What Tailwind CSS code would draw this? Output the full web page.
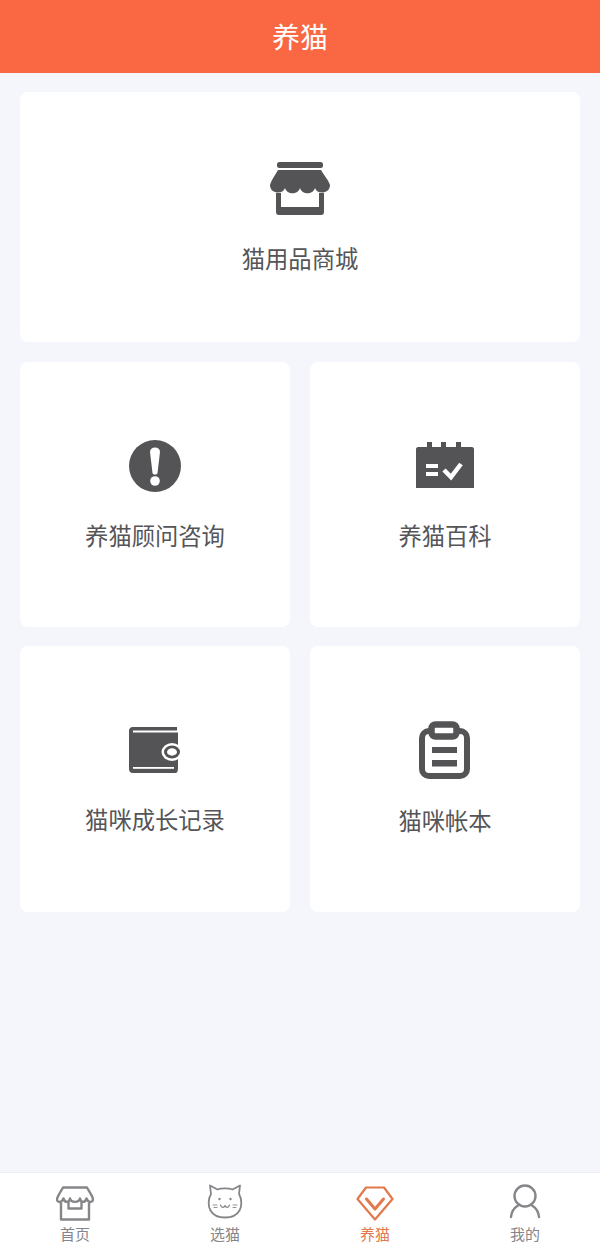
<!DOCTYPE html>
<html lang="zh-CN">
<head>
  <meta charset="UTF-8" />
  <meta name="viewport" content="width=device-width, initial-scale=1.0" />
  <title>养猫</title>
  <script src="https://cdn.jsdelivr.net/npm/@tailwindcss/browser@4"></script>
</head>
<body class="bg-[#f5f6fb] font-['Noto_Sans_CJK_SC','Noto_Sans',sans-serif]">
  <div class="flex flex-col h-[1253px] w-[600px] overflow-hidden">
    <!-- header -->
    <header class="h-[73px] shrink-0 bg-[#f96842] flex items-center justify-center text-white text-[28px] leading-none pb-[2px]">养猫</header>

    <main class="flex-1 px-5 pt-[19px] flex flex-col">
      <a class="h-[250px] bg-white rounded-lg flex flex-col items-center pt-[69px] text-[#555558] text-[23.3px] leading-none">
        <svg class="w-[60px] h-[56px]" viewBox="0 0 60 56">
          <rect x="7" y="1" width="46" height="6" rx="2.500" fill="#545456"/>
          <path d="M8 9H51C54 14 59 20 60 24C60 33 47 34 45 27C43 34 32 34 30 27C28 34 17 34 15 27C13 34 0 33 0 24C1 20 5 14 8 9Z" fill="#545456"/>
          <path d="M6 32V51C6 53 7 54 9 54H51C53 54 54 53 54 51V32H49V46H11V32Z" fill="#545456"/>
        </svg>
        <span class="mt-[30px]">猫用品商城</span>
      </a>

      <div class="grid grid-cols-2 gap-5 mt-5">
        <a class="h-[265px] bg-white rounded-lg flex flex-col items-center pt-[77px] text-[#555558] text-[23.3px] leading-none">
          <svg class="w-[54px] h-[54px]" viewBox="0 0 54 54">
            <circle cx="27" cy="27" r="26" fill="#545456"/>
            <path d="M22 13C22 10 24 8.500 27 8.500C30 8.500 32 10 32 13L29.500 34C29.200 36 24.800 36 24.500 34Z" fill="#fff"/>
            <circle cx="27" cy="42" r="4.800" fill="#fff"/>
          </svg>
          <span class="mt-[31px]">养猫顾问咨询</span>
        </a>
        <a class="h-[265px] bg-white rounded-lg flex flex-col items-center pt-[79px] text-[#555558] text-[23.3px] leading-none">
          <svg class="w-[60px] h-[48px]" viewBox="0 0 60 48">
            <path d="M1 8C1 7 2 6 3 6H12V1H17V6H26V1H31V6H41V1H46V6H57C58 6 59 7 59 8V47H1Z" fill="#545456"/>
            <rect x="11" y="23" width="12" height="4" fill="#fff"/>
            <rect x="11" y="31" width="12" height="4" fill="#fff"/>
            <path d="M29 29L36 36L46 23" fill="none" stroke="#fff" stroke-width="4.500"/>
          </svg>
          <span class="mt-[35px]">养猫百科</span>
        </a>
      </div>

      <div class="grid grid-cols-2 gap-5 mt-[19px]">
        <a class="h-[266px] bg-white rounded-lg flex flex-col items-center pt-[80px] text-[#555558] text-[23.3px] leading-none">
          <svg class="w-[54px] h-[48px]" viewBox="0 0 54 48">
            <path d="M5 1H49V5H50V13V41C50 46 49 47 47 47H5C2 47 1 45 1 43V5C1 3 2 1 5 1Z" fill="#545456"/>
            <rect x="5" y="4.500" width="45" height="2" fill="#fff"/>
            <rect x="5" y="41" width="41" height="1.800" fill="#fff"/>
            <ellipse cx="44" cy="26" rx="10.500" ry="9" fill="#fff"/>
            <ellipse cx="44" cy="26" rx="8" ry="6.500" fill="#545456"/>
            <ellipse cx="44" cy="26" rx="5" ry="3.700" fill="#fff"/>
          </svg>
          <span class="mt-[34px]">猫咪成长记录</span>
        </a>
        <a class="h-[266px] bg-white rounded-lg flex flex-col items-center pt-[74px] text-[#555558] text-[23.3px] leading-none">
          <svg class="w-[54px] h-[60px]" viewBox="0 0 54 60">
            <rect x="4" y="11" width="45" height="45" rx="7" fill="none" stroke="#545456" stroke-width="6"/>
            <rect x="13.500" y="4.500" width="25" height="12" rx="4" fill="#fff" stroke="#545456" stroke-width="6.500"/>
            <rect x="14" y="27" width="25" height="6" fill="#545456"/>
            <rect x="14" y="40" width="25" height="6.500" fill="#545456"/>
          </svg>
          <span class="mt-[29px]">猫咪帐本</span>
        </a>
      </div>
    </main>

    <!-- tab bar -->
    <nav class="h-[81px] shrink-0 bg-white border-t border-[#eeeef2] grid grid-cols-4 text-[15px] leading-none text-[#86868a]">
      <a class="flex flex-col items-center pt-[13px]">
        <svg class="w-[38px] h-[35px]" viewBox="0 0 38 35" fill="none" stroke="#86868a" stroke-width="2.400" stroke-linejoin="round">
          <path d="M7 1.500H31C33 5 36 9 37 13C37 17 32 17 30.500 12.500C29 17 25 17 24 12.500C23 17 15 17 14 12.500C13 17 9 17 7.500 12.500C6 17 1 17 1 13C2 9 5 5 7 1.500Z"/>
          <path d="M5 17V33.500H33V17"/>
          <path d="M12.500 16V22.500H25.500V16"/>
        </svg>
        <span class="mt-[5px]">首页</span>
      </a>
      <a class="flex flex-col items-center pt-[11px]">
        <svg class="w-[36px] h-[37px]" viewBox="0 0 36 37" fill="none" stroke="#86868a" stroke-width="1.800" stroke-linecap="round" stroke-linejoin="round">
          <path d="M4 10L3 1.500L10.500 5.500C14 4 22 4 25.500 5.500L33 1.500L32 10C35 15 35 22 32.500 26.500C30 31 24 33.500 18 33.500C12 33.500 6 31 3.500 26.500C1 22 1 15 4 10Z"/>
          <circle cx="12.500" cy="15" r="1.200" fill="#86868a" stroke="none"/>
          <circle cx="23.500" cy="15" r="1.200" fill="#86868a" stroke="none"/>
          <path d="M13.500 21C14.500 24 17 24 18 21.500C19 24 21.500 24 22.500 21" stroke-width="1.200"/>
          <path d="M6 21H10M7 23.500H10M26 21H30M26 23.500H29" stroke-width="0.900"/>
        </svg>
        <span class="mt-[5px]">选猫</span>
      </a>
      <a class="flex flex-col items-center pt-[13px] text-[#e2794d]">
        <svg class="w-[38px] h-[35px]" viewBox="0 0 38 35" fill="none" stroke="#e2794d" stroke-width="2.200" stroke-linejoin="round" stroke-linecap="round">
          <path d="M10 1.500H28L36.500 13L19 33.500L1.500 13Z"/>
          <path d="M10.500 13L19 23L27.500 13" stroke-width="3"/>
        </svg>
        <span class="mt-[5px]">养猫</span>
      </a>
      <a class="flex flex-col items-center pt-[11px]">
        <svg class="w-[32px] h-[37px]" viewBox="0 0 32 37" fill="none" stroke="#86868a" stroke-width="2.400" stroke-linecap="round">
          <circle cx="16" cy="12" r="10.500"/>
          <path d="M2 33C2.500 27 5 24 9 21.500M30 33C29.500 27 27 24 23 21.500"/>
        </svg>
        <span class="mt-[5px]">我的</span>
      </a>
    </nav>
  </div>
</body>
</html>
